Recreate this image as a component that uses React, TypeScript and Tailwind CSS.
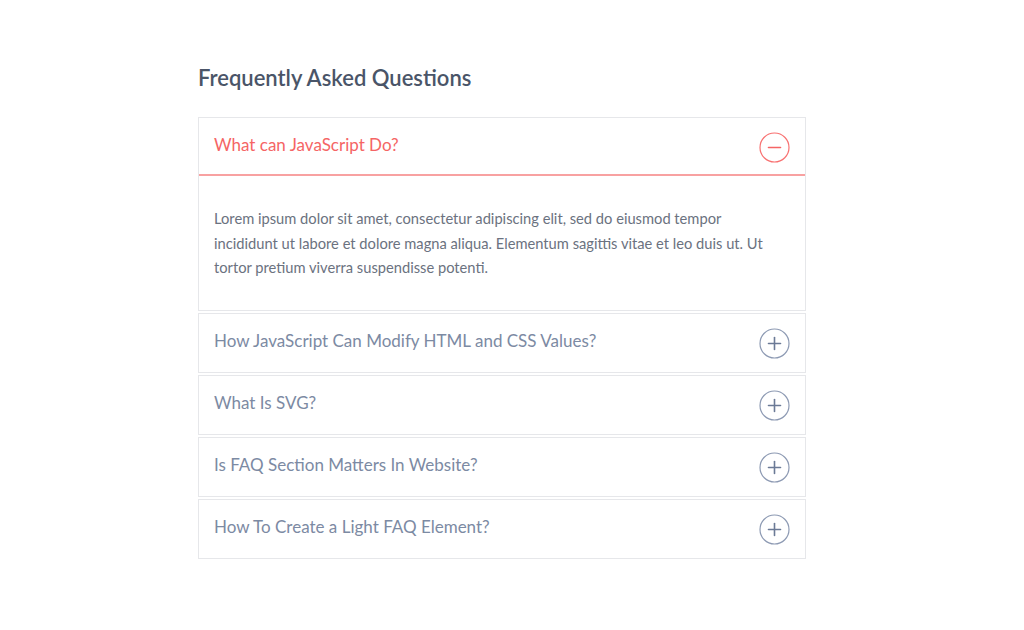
import { useState } from "react";

const faqs = [
  {
    q: "What can JavaScript Do?",
    a: "Lorem ipsum dolor sit amet, consectetur adipiscing elit, sed do eiusmod tempor incididunt ut labore et dolore magna aliqua. Elementum sagittis vitae et leo duis ut. Ut tortor pretium viverra suspendisse potenti.",
  },
  { q: "How JavaScript Can Modify HTML and CSS Values?", a: "" },
  { q: "What Is SVG?", a: "" },
  { q: "Is FAQ Section Matters In Website?", a: "" },
  { q: "How To Create a Light FAQ Element?", a: "" },
];

function Toggle({ open }: { open: boolean }) {
  const color = open ? "#f87171" : "#8d9ab3";
  return (
    <svg width="31" height="31" viewBox="0 0 31 31" fill="none">
      <circle cx="15.5" cy="15.5" r="14.5" stroke={color} strokeWidth="1.2" />
      <path d="M9.5 15.5h12" stroke={open ? "#f56565" : "#6b7a96"} strokeWidth="1.6" strokeLinecap="round" />
      {!open && <path d="M15.5 9.5v12" stroke="#6b7a96" strokeWidth="1.6" strokeLinecap="round" />}
    </svg>
  );
}

export default function App() {
  const [open, setOpen] = useState<number | null>(0);

  return (
    <main
      className="min-h-screen bg-white"
      style={{ fontFamily: "Lato, 'Liberation Sans', sans-serif" }}
    >
      <div className="ml-[198px] w-[608px] pt-[64px]">
        <h2 className="text-[22px] leading-[28px] font-semibold text-[#4a5568] mb-[25px]">
          Frequently Asked Questions
        </h2>

        <div className="flex flex-col gap-[2px]">
          {faqs.map((f, i) => {
            const isOpen = open === i;
            return (
              <div key={f.q} className="border border-[#e6e7ea] bg-white">
                <button
                  onClick={() => setOpen(isOpen ? null : i)}
                  className={`w-full h-[58px] flex items-center justify-between pl-[15px] pr-[15px] text-left ${
                    isOpen ? "border-b-2 border-[#f8a1a1]" : ""
                  }`}
                >
                  <span
                    className={`text-[17px] leading-[24px] mb-[3px] ${
                      isOpen ? "text-[#f56565]" : "text-[#7c8aa3]"
                    }`}
                  >
                    {f.q}
                  </span>
                  <span className="mt-[2px]">
                    <Toggle open={isOpen} />
                  </span>
                </button>
                {isOpen && (
                  <div className="pl-[15px] pr-[36px] pt-[30px] pb-[30px] text-[14.7px] leading-[24.5px] text-[#6b7280]">
                    {f.a}
                  </div>
                )}
              </div>
            );
          })}
        </div>
      </div>
    </main>
  );
}
